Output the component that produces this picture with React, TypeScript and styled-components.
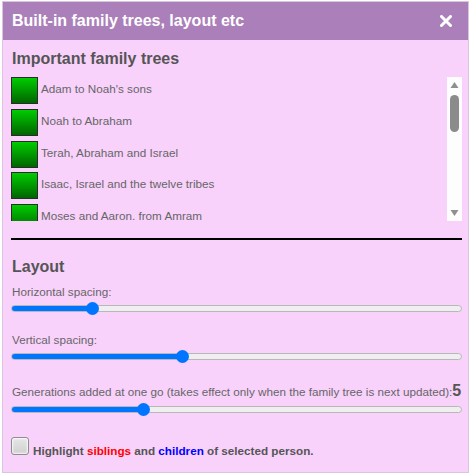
import React from "react";
import styled, { createGlobalStyle } from "styled-components";

const GlobalStyle = createGlobalStyle`
  html, body { margin: 0; padding: 0; background: #ffffff; }
  body { font-family: "Liberation Sans", Arial, sans-serif; }
  * { box-sizing: border-box; }
`;

const Dialog = styled.div`
  margin: 1px 0 0 2px;
  width: 467px;
  border: 1px solid #d9c6de;
  background: #f9d2fc;
  padding-bottom: 14px;
`;

const Header = styled.div`
  height: 38px;
  background: #aa7fba;
  display: flex;
  align-items: center;
  justify-content: space-between;
  padding: 0 16px 0 9px;
`;

const Title = styled.span`
  color: #ffffff;
  font-size: 16px;
  font-weight: bold;
  line-height: 18px;
`;

const CloseButton = styled.button`
  display: flex;
  align-items: center;
  justify-content: center;
  width: 12px;
  height: 12px;
  padding: 0;
  margin: 0;
  border: 0;
  background: transparent;
  cursor: pointer;
`;

const Body = styled.div`
  padding: 10px 6px 0 8px;
`;

const Heading = styled.h2<{ $top?: number }>`
  margin: ${(p) => p.$top ?? 0}px 0 0 0;
  padding-left: 1px;
  font-size: 16px;
  font-weight: bold;
  line-height: 18px;
  color: #555555;
`;

const ListBox = styled.div`
  margin-top: 9px;
  height: 144px;
  display: flex;
`;

const Items = styled.div`
  flex: 1;
  overflow: hidden;
`;

const Item = styled.div`
  display: flex;
  align-items: flex-start;
  gap: 3px;
  height: 31.75px;
`;

const TreeIcon = styled.span`
  flex: none;
  width: 27px;
  height: 27px;
  border: 1px solid #2b2b2b;
  background: linear-gradient(to bottom, #00cc00, #006400);
`;

const ItemText = styled.span`
  font-size: 11.7px;
  line-height: 24px;
  color: #666666;
  white-space: nowrap;
`;

const ScrollBar = styled.div`
  flex: none;
  width: 15px;
  background: #fdfdfd;
  display: flex;
  flex-direction: column;
`;

const ScrollArrow = styled.svg`
  display: block;
  width: 15px;
  height: 15px;
  flex: none;
`;

const ScrollTrack = styled.div`
  flex: 1;
  padding: 3px 3px 0 3px;
`;

const ScrollThumb = styled.div`
  width: 9px;
  height: 37px;
  border-radius: 5px;
  background: #8b8b8b;
`;

const Divider = styled.hr`
  margin: 17px 0 0 0;
  border: 0;
  height: 2px;
  background: #000000;
`;

const Label = styled.div<{ $top: number }>`
  margin-top: ${(p) => p.$top}px;
  padding-left: 1px;
  font-size: 11.7px;
  line-height: 14px;
  color: #666666;
  white-space: nowrap;
`;

const TallLabel = styled(Label)`
  line-height: 16px;
`;

const BigValue = styled.span`
  font-size: 16px;
  font-weight: bold;
  line-height: 16px;
  color: #555555;
`;

const THUMB = 13;
const TRACK_W = 450;

const RangeInput = styled.input.attrs({ type: "range" })<{ $fill: number; $top?: number }>`
  appearance: none;
  -webkit-appearance: none;
  display: block;
  width: 100%;
  height: 16px;
  margin: ${(p) => p.$top ?? 0}px 0 0 0;
  padding: 0;
  background: transparent;

  &::-webkit-slider-runnable-track {
    height: 7px;
    border-radius: 4px;
    border: 1px solid #b8b8b8;
    background: linear-gradient(
      to right,
      #0075ff 0,
      #0075ff ${(p) => p.$fill}px,
      #efefef ${(p) => p.$fill}px,
      #efefef 100%
    );
  }

  &::-webkit-slider-thumb {
    -webkit-appearance: none;
    appearance: none;
    width: ${THUMB}px;
    height: ${THUMB}px;
    margin-top: -4px;
    border: 0;
    border-radius: 50%;
    background: #0075ff;
  }
`;

function Slider(props: { min: number; max: number; value: number; top?: number }) {
  const f = (props.value - props.min) / (props.max - props.min);
  const fill = THUMB / 2 + f * (TRACK_W - THUMB);
  return (
    <RangeInput
      min={props.min}
      max={props.max}
      step="any"
      defaultValue={props.value}
      $fill={fill}
      $top={props.top}
    />
  );
}

const CheckRow = styled.label`
  display: block;
  margin-top: 20px;
  font-size: 11.7px;
  font-weight: bold;
  color: #555555;
  line-height: 14px;
`;

const Check = styled.input.attrs({ type: "checkbox" })`
  appearance: none;
  display: inline-block;
  vertical-align: baseline;
  width: 18px;
  height: 18px;
  margin: 0 4px 0 0;
  border: 1px solid #8e8e8e;
  border-radius: 3px;
  background: linear-gradient(to bottom, #e6e6e6, #d0d0d0);
  box-shadow: inset 0 0 2px 1px rgba(255, 255, 255, 0.8);
`;

const Colored = styled.span<{ $color: string }>`
  color: ${(p) => p.$color};
`;

const trees = [
  "Adam to Noah's sons",
  "Noah to Abraham",
  "Terah, Abraham and Israel",
  "Isaac, Israel and the twelve tribes",
  "Moses and Aaron. from Amram",
];

export default function App() {
  return (
    <>
      <GlobalStyle />
      <Dialog>
        <Header>
          <Title>Built-in family trees, layout etc</Title>
          <CloseButton aria-label="close">
            <svg width="12" height="12" viewBox="0 0 12 12">
              <path d="M1.5 1.5 L10.5 10.5 M10.5 1.5 L1.5 10.5" stroke="#ffffff" strokeWidth="3" strokeLinecap="round" />
            </svg>
          </CloseButton>
        </Header>
        <Body>
          <Heading>Important family trees</Heading>
          <ListBox>
            <Items>
              {trees.map((t) => (
                <Item key={t}>
                  <TreeIcon />
                  <ItemText>{t}</ItemText>
                </Item>
              ))}
            </Items>
            <ScrollBar>
              <ScrollArrow viewBox="0 0 15 15">
                <polygon points="3.5,11 11.5,11 7.5,5" fill="#8f8f8f" />
              </ScrollArrow>
              <ScrollTrack>
                <ScrollThumb />
              </ScrollTrack>
              <ScrollArrow viewBox="0 0 15 15">
                <polygon points="3.5,4 11.5,4 7.5,10" fill="#8f8f8f" />
              </ScrollArrow>
            </ScrollBar>
          </ListBox>
          <Divider />
          <Heading $top={18}>Layout</Heading>
          <Label $top={9}>Horizontal spacing:</Label>
          <Slider min={0} max={1} value={0.1705} top={1} />
          <Label $top={17}>Vertical spacing:</Label>
          <Slider min={0} max={1} value={0.3757} top={1} />
          <TallLabel $top={19}>
            Generations added at one go (takes effect only when the family tree is next updated):<BigValue>5</BigValue>
          </TallLabel>
          <Slider min={1} max={15} value={5} top={1} />
          <CheckRow>
            <Check />
            Highlight <Colored $color="#ff0000">siblings</Colored> and <Colored $color="#0000ff">children</Colored> of selected person.
          </CheckRow>
        </Body>
      </Dialog>
    </>
  );
}
